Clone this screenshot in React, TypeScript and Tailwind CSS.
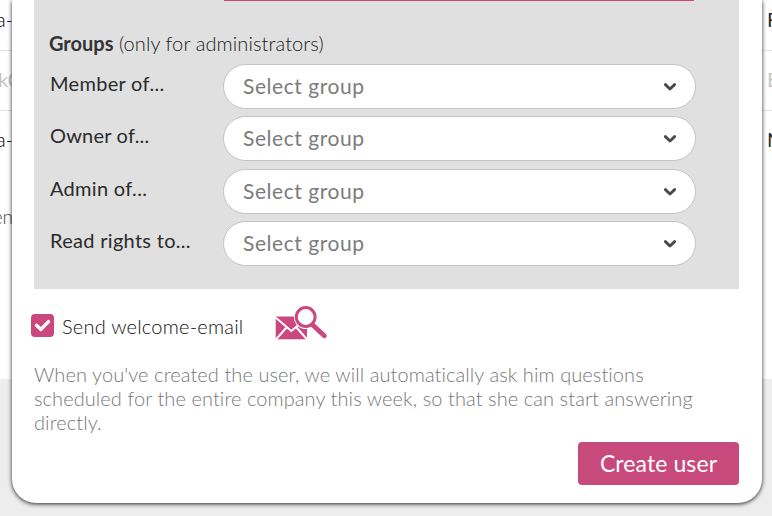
import React from 'react';

const groupFields = [
  { label: 'Member of...', row: 'mb-[7px]', text: 'tracking-[0.3px]' },
  { label: 'Owner of...', row: 'mb-2', text: 'tracking-[0.2px]' },
  { label: 'Admin of...', row: 'mb-[7px]', text: 'tracking-[0.3px]' },
  { label: 'Read rights to...', row: '', text: 'tracking-[0.3px]' },
];

const Chevron: React.FC = () => (
  <svg width="14" height="10" viewBox="0 0 14 10" fill="none">
    <path d="M2.4 2.6L7 7l4.6-4.4" stroke="#4a4a4a" strokeWidth="2.9" strokeLinecap="round" strokeLinejoin="round" />
  </svg>
);

const GroupSelect: React.FC = () => (
  <button className="flex h-[45px] w-[473px] items-center justify-between rounded-full border border-[#c4c4c4] bg-white pl-[19px] pr-[18px] text-left">
    <span className="mb-[1px] text-[21px] leading-6 tracking-[0.55px] text-[#7c7c7c]">Select group</span>
    <Chevron />
  </button>
);

const MailPreviewIcon: React.FC = () => (
  <svg width="54" height="36" viewBox="0 0 54 36" fill="none">
    <path d="M0.7 11.5h31.3v22.8H0.7z" fill="#cb487e" />
    <path d="M0 12L16.3 26 30 14.5M0 35.5l11.5-13M33 35.5L21.5 22.5" stroke="#fff" strokeWidth="2" />
    <circle cx="30.7" cy="12.5" r="11.6" fill="#fff" />
    <path d="M37 19l12.5 11.3" stroke="#fff" strokeWidth="7" />
    <path d="M38 20.3L49.3 30.8" stroke="#cb487e" strokeWidth="4.8" strokeLinecap="round" />
    <circle cx="30.7" cy="12" r="9.4" stroke="#cb487e" strokeWidth="3" fill="#fff" />
  </svg>
);

const App: React.FC = () => {
  return (
    <div className="relative h-[516px] w-[772px] overflow-hidden bg-[#ededed] font-['Lato',sans-serif] text-[20px] leading-6 text-[#2b2b2b]">
      {/* User list behind the dialog */}
      <div className="flex h-[379px] flex-col bg-white">
        <div className="flex h-[51px] items-center justify-between border-b border-[#e2e2e2]">
          <span className="flex w-[13px] justify-end pb-[13px] font-light text-black">a-</span>
          <span className="w-[5px] pb-[13px]">F</span>
        </div>
        <div className="flex h-[60px] items-center justify-between border-b border-[#e2e2e2] text-[#c4c4c4]">
          <span className="flex w-[21px] justify-end pb-1">kC</span>
          <span className="w-[5px] pb-1">E</span>
        </div>
        <div className="flex h-[58px] items-center justify-between">
          <span className="flex w-[13px] justify-end pb-[3px] font-light text-black">a-</span>
          <span className="w-[5px] pb-[3px]">N</span>
        </div>
        <div className="flex w-[13px] justify-end pt-9 text-[19px] font-light text-[#444444]">en</div>
      </div>

      {/* Dialog */}
      <div className="absolute left-3 top-0 flex h-[503px] w-[750px] flex-col rounded-b-[24px] bg-white pl-[22px] pr-[23px] shadow-[0_1px_4px_rgba(0,0,0,0.85)]">
        <section className="h-[289px] shrink-0 bg-[#e0e0e0] pl-[15px]">
          <div className="ml-[175px] h-px w-[470px] bg-[#cb487e]"></div>
          <h2 className="mt-[30px] h-[33px] whitespace-nowrap font-light text-[#1a1a1a]">
            <span className="font-bold text-[#333333]">Groups</span>{' '}
            <span className="tracking-[0.1px]">(only for administrators)</span>
          </h2>
          {groupFields.map((field) => (
            <div key={field.label} className={`flex h-[45px] ${field.row}`}>
              <span className="w-[174px] shrink-0 pl-px pt-[7px]">
                <span className={field.text}>{field.label}</span>
              </span>
              <GroupSelect />
            </div>
          ))}
        </section>

        <div className="-ml-[3px] mt-4 flex h-9 items-center">
          <div className="mt-1 flex size-[23px] items-center justify-center rounded-[4px] bg-[#cb487e]">
            <svg width="19" height="15" viewBox="0 0 19 15" fill="none">
              <path d="M3.5 7.2L7.9 11.4 15.5 3.6" stroke="#fff" strokeWidth="3.4" strokeLinecap="round" strokeLinejoin="round" />
            </svg>
          </div>
          <span className="ml-2 mt-1.5 w-[213px] font-light tracking-[0.22px] text-[#111111]">Send welcome-email</span>
          <MailPreviewIcon />
        </div>

        <p className="mt-[21px] whitespace-nowrap font-light tracking-[0.08px] text-[#787878]">
          When you've created the user, we will automatically ask him questions
          <br />
          scheduled for the entire company this week, so that she can start answering
          <br />
          directly.
        </p>

        <button className="mt-2 h-[43px] w-[161px] self-end rounded-[4px] bg-[#c84a7d] text-[23px] leading-none tracking-[0.1px] text-white">
          Create user
        </button>
      </div>
    </div>
  );
};

export default App;
